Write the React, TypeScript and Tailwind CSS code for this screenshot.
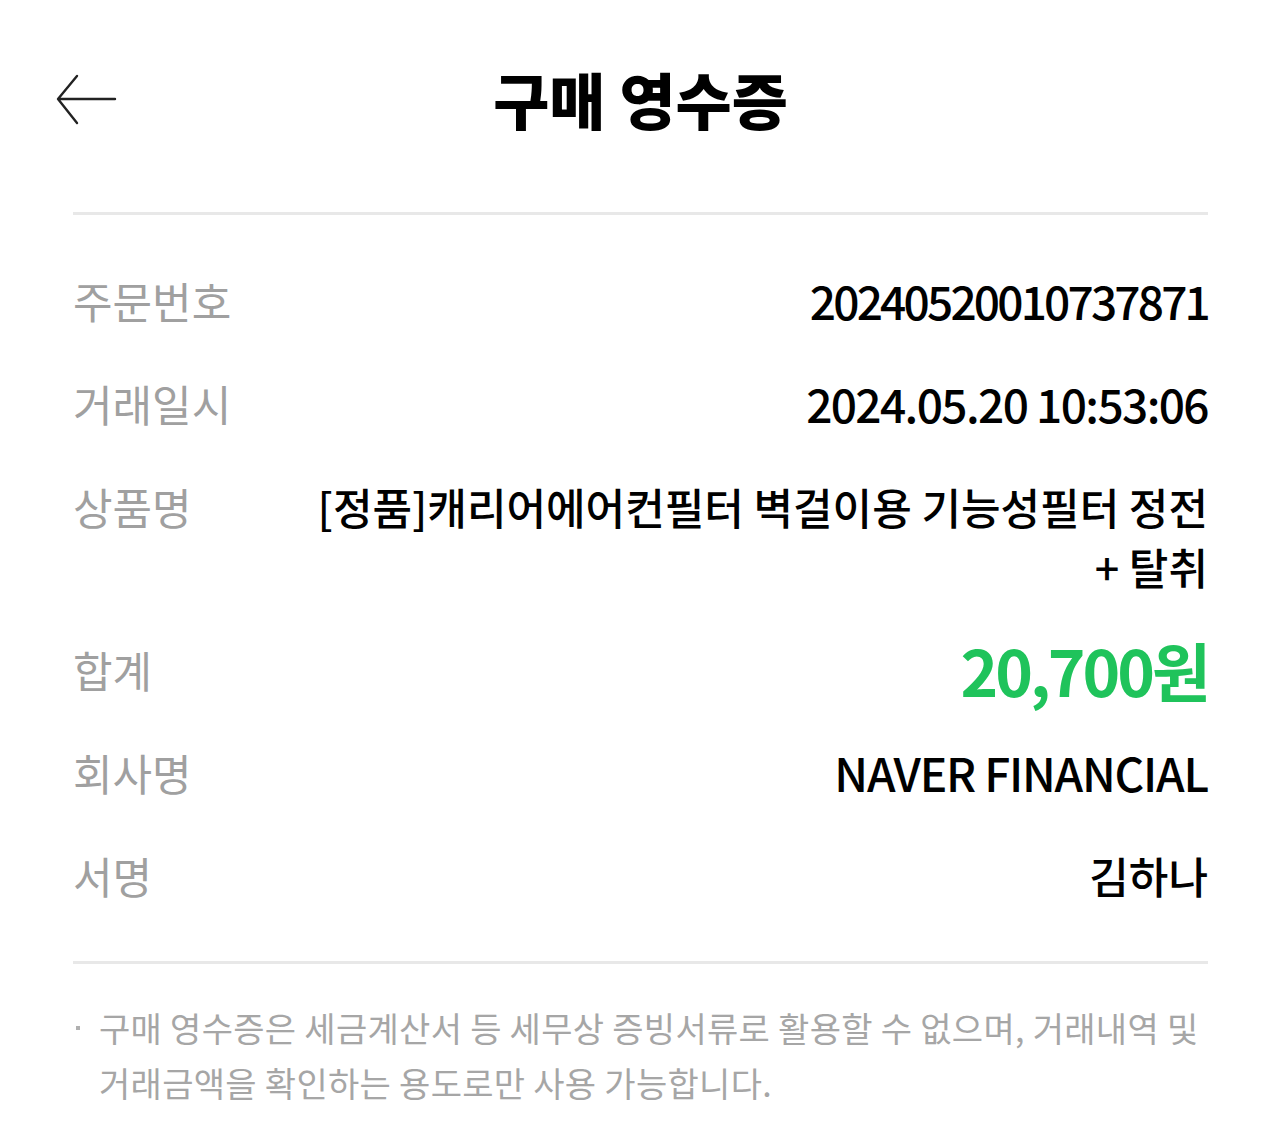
import React from 'react'

type Row = { label: string; value: React.ReactNode; cls: string }

const rows: Row[] = [
  { label: '주문번호', value: '20240520010737871', cls: 'text-[46px] tracking-[-2.8px] font-medium text-black' },
  { label: '거래일시', value: '2024.05.20 10:53:06', cls: 'text-[46px] tracking-[-1.6px] font-medium text-black' },
  {
    label: '상품명',
    value: '[정품]캐리어에어컨필터 벽걸이용 기능성필터 정전 + 탈취',
    cls: 'text-[43px] font-medium text-black break-keep',
  },
  { label: '합계', value: '20,700원', cls: 'text-[64px] tracking-[-3px] font-bold text-[#1fc35b]' },
  { label: '회사명', value: 'NAVER FINANCIAL', cls: 'text-[46px] tracking-[-1.2px] font-medium text-black' },
  { label: '서명', value: '김하나', cls: 'text-[43px] font-medium text-black' },
]

const App = () => {
  return (
    <div className="min-h-screen w-full bg-white font-['Noto_Sans_CJK_KR','Noto_Sans',sans-serif]">
      <div className="pl-[73px] pr-[72px]">
        {/* header */}
        <div className="relative flex h-[215px] items-center justify-center border-b-[3px] border-[#e8e8e8]">
          <button className="absolute left-[-18px] top-[74px] flex h-[52px] w-[62px] items-center justify-center">
            <svg width="62" height="52" viewBox="0 0 62 52" fill="none">
              <path d="M4 25 H60 M22 2 L3 25 L22 49" stroke="#222" strokeWidth="2.4" strokeLinecap="round" strokeLinejoin="round" />
            </svg>
          </button>
          <h1 className="mt-[-14px] text-[61px] font-black text-black">구매 영수증</h1>
        </div>

        {/* detail rows */}
        <div className="flex flex-col gap-[43px] border-b-[3px] border-[#e8e8e8] pb-[56px] pt-[55px]">
          {rows.map((r) => (
            <div key={r.label} className="grid grid-cols-[230px_1fr] items-start">
              <div className="text-[43px] leading-[60px] text-[#a0a0a0]">{r.label}</div>
              <div className={'pl-[10px] text-right leading-[60px] ' + r.cls}>{r.value}</div>
            </div>
          ))}
        </div>

        {/* notice */}
        <div className="flex items-start gap-[19px] pt-[36px] text-[34px] leading-[55px] tracking-[0.3px] text-[#a6a6a6]">
          <span className="mt-[26px] ml-[3px] h-[4px] w-[4px] shrink-0 bg-[#b0b0b0]" />
          <p className="break-keep">
            구매 영수증은 세금계산서 등 세무상 증빙서류로 활용할 수 없으며, 거래내역 및 거래금액을 확인하는 용도로만 사용 가능합니다.
          </p>
        </div>
      </div>
    </div>
  )
}

export default App
